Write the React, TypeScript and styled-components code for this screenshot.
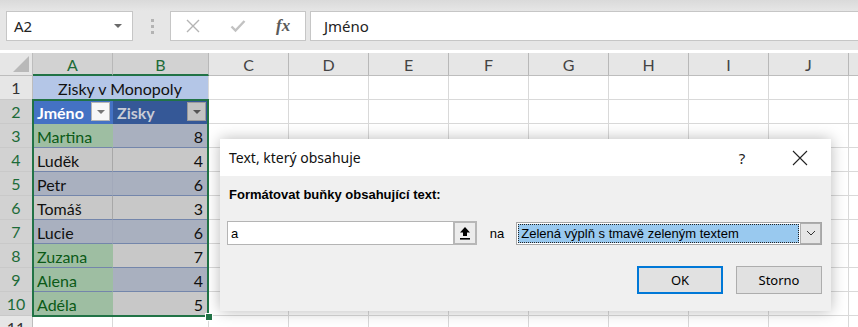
import React from "react";
import styled, { createGlobalStyle, css } from "styled-components";

const GlobalStyle = createGlobalStyle`
  html, body {
    margin: 0;
    padding: 0;
    background: #ffffff;
    overflow: hidden;
  }
`;

const sheetFont = `"Lato", "Liberation Sans", sans-serif`;
const uiFont = `"Noto Sans", "Open Sans", sans-serif`;
const dlgFont = `"Liberation Sans", "DejaVu Sans", sans-serif`;

const Page = styled.div`
  position: relative;
  width: 858px;
  height: 327px;
  overflow: hidden;
  background: #fff;
`;

/* ---------- formula bar ---------- */

const Toolbar = styled.div`
  height: 50px;
  box-sizing: border-box;
  padding: 11px 0 0 6px;
  margin-bottom: 3px;
  display: flex;
  align-items: flex-start;
  background: linear-gradient(#dadada, #e6e6e6 11px, #e6e6e6);
`;

const NameBox = styled.div`
  width: 127px;
  height: 30px;
  box-sizing: border-box;
  border: 1px solid #c6c6c6;
  background: #fff;
  display: flex;
  align-items: center;
  justify-content: space-between;
  padding: 0 10px 0 7px;
  font-family: ${uiFont};
  font-size: 15px;
  color: #222;
`;

const Caret = styled.span`
  width: 0;
  height: 0;
  border-left: 4px solid transparent;
  border-right: 4px solid transparent;
  border-top: 4px solid #6a6a6a;
`;

const Grip = styled.div`
  margin: 8px 16px 0 18px;
  display: flex;
  flex-direction: column;
  gap: 3px;
  span {
    width: 3px;
    height: 3px;
    background: #b3b3b3;
  }
`;

const FormulaButtons = styled.div`
  width: 136px;
  height: 30px;
  box-sizing: border-box;
  border: 1px solid #c6c6c6;
  background: #fff;
  display: flex;
  align-items: center;
  padding-left: 15px;
  gap: 30px;
`;

const Fx = styled.span`
  font-family: "Liberation Serif", "DejaVu Serif", serif;
  font-style: italic;
  font-weight: bold;
  font-size: 17px;
  color: #5a5a5a;
`;

const FormulaInput = styled.div`
  flex: 1;
  margin-left: 4px;
  height: 30px;
  box-sizing: border-box;
  border: 1px solid #c6c6c6;
  border-right: none;
  background: #fff;
  display: flex;
  align-items: center;
  padding-left: 13px;
  font-family: ${uiFont};
  font-size: 15px;
  color: #222;
`;

/* ---------- sheet ---------- */

const Sheet = styled.div`
  display: grid;
  grid-template-columns: 33px 80px 96px repeat(9, 80px);
  grid-template-rows: 23px;
  grid-auto-rows: 24px;
  font-family: ${sheetFont};
  font-size: 16px;
`;

const Corner = styled.div`
  background: #e6e6e6;
  border-right: 1px solid #bdbdbd;
  border-bottom: 1px solid #bdbdbd;
  box-sizing: border-box;
  position: relative;
  &::after {
    content: "";
    position: absolute;
    right: 3px;
    bottom: 3px;
    border-left: 16px solid transparent;
    border-bottom: 16px solid #b9b9b9;
  }
`;

const ColHead = styled.div<{ $sel?: boolean }>`
  box-sizing: border-box;
  background: ${(p) => (p.$sel ? "#d2d2d2" : "#e6e6e6")};
  color: ${(p) => (p.$sel ? "#1d6b38" : "#444")};
  border-right: 1px solid #b8b8b8;
  border-bottom: ${(p) => (p.$sel ? "2px solid #217346" : "1px solid #bdbdbd")};
  display: flex;
  align-items: center;
  justify-content: center;
  padding-top: 1px;
`;

const RowHead = styled.div<{ $sel?: boolean }>`
  box-sizing: border-box;
  background: ${(p) => (p.$sel ? "#d2d2d2" : "#e6e6e6")};
  color: ${(p) => (p.$sel ? "#1d6b38" : "#333")};
  border-right: 1px solid #bdbdbd;
  border-bottom: 1px solid #c9c9c9;
  display: flex;
  align-items: center;
  justify-content: center;
`;

const Cell = styled.div`
  box-sizing: border-box;
  border-right: 1px solid #d9d9d9;
  border-bottom: 1px solid #d9d9d9;
`;

type Kind = "title" | "head" | "headShade" | "green" | "band" | "gray";

const fills: Record<Kind, string> = {
  title: "#b4c6e7",
  head: "#4472c4",
  headShade: "#355897",
  green: "#9ebea2",
  band: "#a9b0bf",
  gray: "#c8c8c8",
};

const TableCell = styled.div<{ $kind: Kind; $right?: boolean; $span?: number; $divider?: string }>`
  box-sizing: border-box;
  grid-column: span ${(p) => p.$span || 1};
  background: ${(p) => fills[p.$kind]};
  display: flex;
  align-items: center;
  justify-content: ${(p) => (p.$right ? "flex-end" : "flex-start")};
  padding: 1px 5px 0 4px;
  color: #111;
  border-bottom: 1px solid #7486ab;
  border-right: 1px solid ${(p) => p.$divider || "transparent"};
  position: relative;
  ${(p) =>
    p.$kind === "title" &&
    css`
      justify-content: center;
      border-bottom: 1px solid #d9d9d9;
      border-right: 1px solid #d9d9d9;
      color: #111;
    `}
  ${(p) =>
    p.$kind === "green" &&
    css`
      color: #0b5a17;
    `}
  ${(p) =>
    (p.$kind === "head" || p.$kind === "headShade") &&
    css`
      font-weight: bold;
      color: ${p.$kind === "head" ? "#fff" : "#c9ccd6"};
      border-bottom: none;
    `}
`;

const FilterButton = styled.span<{ $shade?: boolean }>`
  position: absolute;
  right: 2px;
  top: 2px;
  width: 19px;
  height: 19px;
  box-sizing: border-box;
  background: ${(p) => (p.$shade ? "#c3c3c3" : "#f7f7f7")};
  border: 1px solid ${(p) => (p.$shade ? "#9a9a9a" : "#b5b5b5")};
  display: flex;
  align-items: center;
  justify-content: center;
  &::after {
    content: "";
    border-left: 4px solid transparent;
    border-right: 4px solid transparent;
    border-top: 4px solid ${(p) => (p.$shade ? "#555" : "#777")};
  }
`;

const Selection = styled.div`
  position: absolute;
  left: 32px;
  top: 99px;
  width: 177px;
  height: 218px;
  box-sizing: border-box;
  border: 2px solid #217346;
  pointer-events: none;
`;

const FillHandle = styled.span`
  position: absolute;
  right: -6px;
  bottom: -6px;
  width: 6px;
  height: 6px;
  background: #217346;
  border: 1px solid #fff;
`;

/* ---------- dialog ---------- */

const Dialog = styled.div`
  position: absolute;
  left: 220px;
  top: 139px;
  width: 611px;
  height: 172px;
  background: #f0f0f0;
  box-shadow: 0 0 14px rgba(0, 0, 0, 0.28);
  display: flex;
  flex-direction: column;
`;

const TitleBar = styled.div`
  height: 37px;
  background: #fff;
  display: flex;
  align-items: center;
  justify-content: space-between;
  padding: 0 8px 0 9px;
`;

const Title = styled.span`
  font-family: ${uiFont};
  font-size: 14px;
  color: #111;
`;

const TitleActions = styled.div`
  display: flex;
  align-items: center;
  height: 100%;
`;

const Help = styled.span`
  font-family: ${uiFont};
  font-size: 15px;
  color: #222;
  width: 46px;
  text-align: center;
`;

const CloseBtn = styled.span`
  width: 46px;
  margin-left: 12px;
  display: flex;
  justify-content: center;
`;

const Body = styled.div`
  flex: 1;
  padding: 11px 9px 0 7px;
  display: flex;
  flex-direction: column;
  font-family: ${dlgFont};
  font-size: 12px;
  color: #000;
`;

const Label = styled.div`
  font-weight: bold;
  font-size: 13px;
  line-height: 16px;
  margin-left: 2px;
`;

const FieldRow = styled.div`
  margin-top: 18px;
  height: 24px;
  display: flex;
  align-items: center;
`;

const TextField = styled.div`
  width: 250px;
  height: 24px;
  display: flex;
`;

const FieldInput = styled.div`
  flex: 1;
  box-sizing: border-box;
  border: 1px solid #b4b4b4;
  border-right: none;
  background: #fff;
  display: flex;
  align-items: center;
  padding-left: 3px;
  font-size: 13px;
`;

const RefButton = styled.div`
  width: 24px;
  box-sizing: border-box;
  border: 2px solid #b7b7b7;
  background: #ececec;
  display: flex;
  align-items: center;
  justify-content: center;
`;

const Na = styled.span`
  margin: 0 12px 0 13px;
  font-size: 13px;
`;

const SelectBox = styled.div`
  width: 306px;
  height: 23px;
  box-sizing: border-box;
  border: 1px solid #a6a6a6;
  background: #fff;
  display: flex;
  padding: 1px;
`;

const SelectValue = styled.div`
  flex: 1;
  box-sizing: border-box;
  background: #99c9ef;
  border: 1px dotted #222;
  display: flex;
  align-items: center;
  padding-left: 2px;
  font-size: 13px;
  color: #000;
`;

const SelectArrow = styled.div`
  width: 21px;
  box-sizing: border-box;
  border: 1px solid #adadad;
  background: #e5e5e5;
  margin: -1px -1px -1px 1px;
  display: flex;
  align-items: center;
  justify-content: center;
`;

const Buttons = styled.div`
  margin-top: 21px;
  display: flex;
  justify-content: flex-end;
  gap: 13px;
`;

const Button = styled.div<{ $primary?: boolean }>`
  width: 86px;
  height: 28px;
  box-sizing: border-box;
  background: #e1e1e1;
  border: ${(p) => (p.$primary ? "2px solid #0078d7" : "1px solid #adadad")};
  display: flex;
  align-items: center;
  justify-content: center;
  font-family: ${uiFont};
  font-size: 13px;
  color: #000;
`;

/* ---------- data ---------- */

// last column is only a sliver at the window edge, its letter is off screen
const cols = ["A", "B", "C", "D", "E", "F", "G", "H", "I", "J", ""];

const people = [
  { name: "Martina", score: 8, green: true },
  { name: "Luděk", score: 4, green: false },
  { name: "Petr", score: 6, green: false },
  { name: "Tomáš", score: 3, green: false },
  { name: "Lucie", score: 6, green: false },
  { name: "Zuzana", score: 7, green: true },
  { name: "Alena", score: 4, green: true },
  { name: "Adéla", score: 5, green: true },
];

const emptyCells = (n: number, key: string) =>
  Array.from({ length: n }, (_, i) => <Cell key={key + i} />);

function App() {
  const rows: React.ReactNode[] = [];

  // row 1
  rows.push(<RowHead key="r1">1</RowHead>);
  rows.push(
    <TableCell key="t1" $kind="title" $span={2}>
      Zisky v Monopoly
    </TableCell>
  );
  rows.push(...emptyCells(9, "e1-"));

  // row 2
  rows.push(
    <RowHead key="r2" $sel>
      2
    </RowHead>
  );
  rows.push(
    <TableCell key="h1" $kind="head">
      Jméno
      <FilterButton />
    </TableCell>
  );
  rows.push(
    <TableCell key="h2" $kind="headShade">
      Zisky
      <FilterButton $shade />
    </TableCell>
  );
  rows.push(...emptyCells(9, "e2-"));

  people.forEach((p, i) => {
    const band = i % 2 === 0;
    const aKind: Kind = p.green ? "green" : band ? "band" : "gray";
    const bKind: Kind = band ? "band" : "gray";
    const divider = p.green ? undefined : band ? "#a2a9ba" : "#a8a8a8";
    rows.push(
      <RowHead key={"r" + (i + 3)} $sel>
        {i + 3}
      </RowHead>
    );
    rows.push(
      <TableCell key={"a" + i} $kind={aKind} $divider={divider}>
        {p.name}
      </TableCell>
    );
    rows.push(
      <TableCell key={"b" + i} $kind={bKind} $right>
        {p.score}
      </TableCell>
    );
    rows.push(...emptyCells(9, "e" + (i + 3) + "-"));
  });

  [11, 12].forEach((n) => {
    rows.push(<RowHead key={"r" + n}>{n}</RowHead>);
    rows.push(...emptyCells(11, "e" + n + "-"));
  });

  return (
    <Page>
      <GlobalStyle />
      <Toolbar>
        <NameBox>
          A2
          <Caret />
        </NameBox>
        <Grip>
          <span />
          <span />
          <span />
        </Grip>
        <FormulaButtons>
          <svg width="14" height="14" viewBox="0 0 14 14">
            <path d="M1 1 L13 13 M13 1 L1 13" stroke="#b4b4b4" strokeWidth="1.4" />
          </svg>
          <svg width="16" height="14" viewBox="0 0 16 14">
            <path d="M1.5 7.5 L5.5 11.5 L14.5 2" stroke="#c2c2c2" strokeWidth="2.4" fill="none" />
          </svg>
          <Fx>fx</Fx>
        </FormulaButtons>
        <FormulaInput>Jméno</FormulaInput>
      </Toolbar>

      <Sheet>
        <Corner />
        {cols.map((c, i) => (
          <ColHead key={"c" + i} $sel={c === "A" || c === "B"}>
            {c}
          </ColHead>
        ))}
        {rows}
      </Sheet>

      <Selection>
        <FillHandle />
      </Selection>

      <Dialog>
        <TitleBar>
          <Title>Text, který obsahuje</Title>
          <TitleActions>
            <Help>?</Help>
            <CloseBtn>
              <svg width="16" height="16" viewBox="0 0 16 16">
                <path d="M1 1 L15 15 M15 1 L1 15" stroke="#222" strokeWidth="1.1" />
              </svg>
            </CloseBtn>
          </TitleActions>
        </TitleBar>
        <Body>
          <Label>Formátovat buňky obsahující text:</Label>
          <FieldRow>
            <TextField>
              <FieldInput>a</FieldInput>
              <RefButton>
                <svg width="12" height="14" viewBox="0 0 12 14">
                  <path d="M6 1 L11 6.5 L8 6.5 L8 10 L4 10 L4 6.5 L1 6.5 Z" fill="#000" />
                  <rect x="1" y="12" width="10" height="1.6" fill="#000" />
                </svg>
              </RefButton>
            </TextField>
            <Na>na</Na>
            <SelectBox>
              <SelectValue>Zelená výplň s tmavě zeleným textem</SelectValue>
              <SelectArrow>
                <svg width="10" height="6" viewBox="0 0 10 6">
                  <path d="M1 1 L5 5 L9 1" stroke="#333" strokeWidth="1" fill="none" />
                </svg>
              </SelectArrow>
            </SelectBox>
          </FieldRow>
          <Buttons>
            <Button $primary>OK</Button>
            <Button>Storno</Button>
          </Buttons>
        </Body>
      </Dialog>
    </Page>
  );
}

export default App;
